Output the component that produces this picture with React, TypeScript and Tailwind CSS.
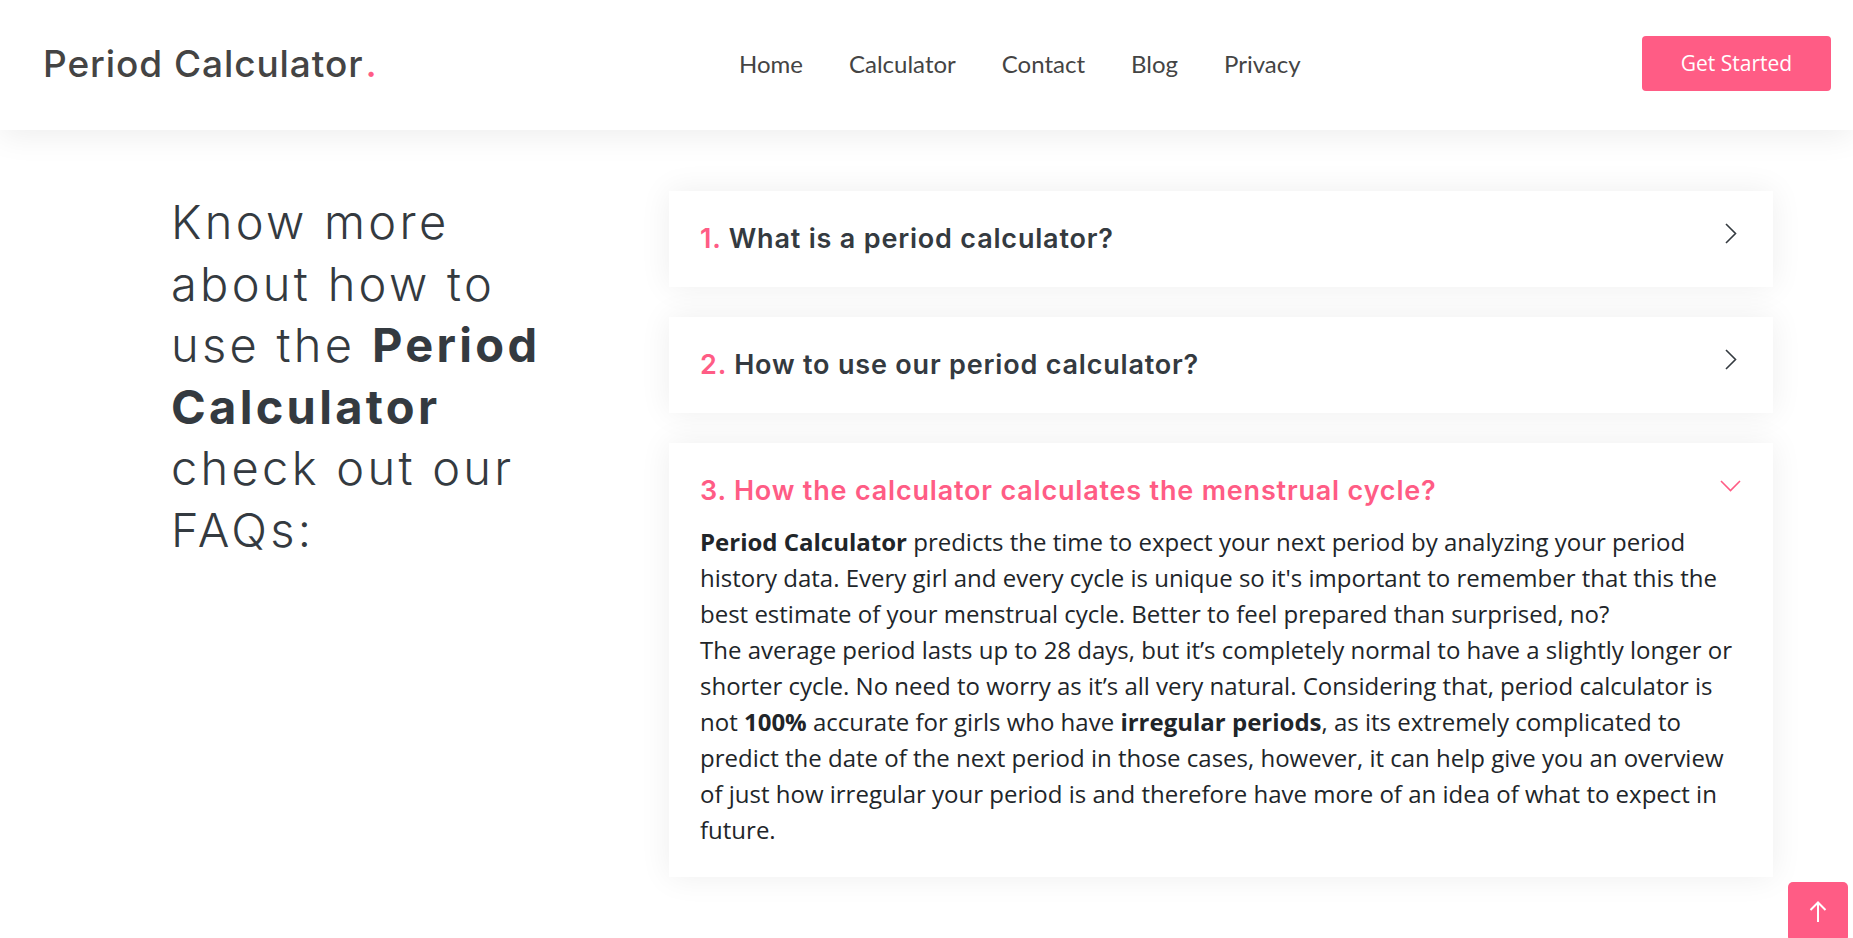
import React from "react";

const faqs = [
  { num: "1.", title: "What is a period calculator?", open: false },
  { num: "2.", title: "How to use our period calculator?", open: false },
  { num: "3.", title: "How the calculator calculates the menstrual cycle?", open: true },
];

const heading = "font-['Inter',sans-serif]";

function ChevronRight() {
  return (
    <svg width="12" height="21" viewBox="0 0 12 21" fill="none" className="mr-[5px] mt-[-10px]">
      <path d="M1 1 L10.5 10.5 L1 20" stroke="#343a40" strokeWidth="1.6" />
    </svg>
  );
}

function ChevronDown() {
  return (
    <svg width="21" height="12" viewBox="0 0 21 12" fill="none" className="mr-[1px] mt-[-10px]">
      <path d="M1 1 L10.5 10.5 L20 1" stroke="#ff5c85" strokeWidth="1.6" />
    </svg>
  );
}

export default function App() {
  return (
    <div className="min-h-screen bg-white font-['Open_Sans',sans-serif]">
      {/* Header */}
      <header className="relative z-10 flex h-[130px] items-center bg-white pb-[3px] pl-[43px] pr-[22px] shadow-[0_6px_30px_rgba(0,0,0,0.07)]">
        <div className="w-[696px]">
          <span className={`${heading} text-[37px] font-medium tracking-[0.025em] text-[#444]`}>
            Period Calculator
            <span className="ml-[2px] text-[#ff5c85]">.</span>
          </span>
        </div>
        <nav className="flex gap-[46px] font-['Lato',sans-serif] text-[24px] text-[#444]">
          <a>Home</a>
          <a>Calculator</a>
          <a>Contact</a>
          <a>Blog</a>
          <a>Privacy</a>
        </nav>
        <button className="ml-auto h-[55px] w-[189px] rounded-[4px] bg-[#ff5c85] text-[21px] text-white">
          Get Started
        </button>
      </header>

      {/* FAQ section */}
      <main className="flex pl-[171px] pt-[61px]">
        <div className="w-[498px]">
          <h2 className={`${heading} text-[47px] font-light leading-[61.5px] tracking-[0.07em] text-[#343a40]`}>
            Know more
            <br />
            about how to
            <br />
            use the <span className="font-bold">Period</span>
            <br />
            <span className="font-bold">Calculator</span>
            <br />
            check out our
            <br />
            FAQs:
          </h2>
        </div>

        <div className="flex w-[1104px] flex-col gap-[30px]">
          {faqs.map((faq) => (
            <div
              key={faq.num}
              className={`bg-white px-[31px] pt-[30px] shadow-[0_0_30px_rgba(0,0,0,0.07)] ${
                faq.open ? "pb-[29px]" : "pb-[31px]"
              }`}
            >
              <div className="flex items-center justify-between">
                <h3
                  className={`${heading} text-[27px] font-semibold leading-[35px] tracking-[0.03em] ${
                    faq.open ? "text-[#ff5c85]" : "text-[#343a40]"
                  }`}
                >
                  <span className="text-[#ff5c85]">{faq.num}</span> {faq.title}
                </h3>
                {faq.open ? <ChevronDown /> : <ChevronRight />}
              </div>
              {faq.open && (
                <div className="mt-[16px] text-[24px] leading-[36px] text-[#212529]">
                  <p>
                    <span className="font-bold">Period Calculator</span> predicts the time to expect
                    your next period by analyzing your period history data. Every girl and every cycle
                    is unique so it's important to remember that this the best estimate of your
                    menstrual cycle. Better to feel prepared than surprised, no?
                  </p>
                  <p>
                    The average period lasts up to 28 days, but it’s completely normal to have a
                    slightly longer or shorter cycle. No need to worry as it’s all very natural.
                    Considering that, period calculator is not <span className="font-bold">100%</span>{" "}
                    accurate for girls who have <span className="font-bold">irregular periods</span>,
                    as its extremely complicated to predict the date of the next period in those
                    cases, however, it can help give you an overview of just how irregular your period
                    is and therefore have more of an idea of what to expect in future.
                  </p>
                </div>
              )}
            </div>
          ))}
        </div>
      </main>

      {/* Back to top */}
      <button className="fixed right-[5px] top-[882px] flex h-[60px] w-[60px] items-start justify-center rounded-[5px] bg-[#ff5c85] pt-[19px]">
        <svg width="18" height="22" viewBox="0 0 18 22" fill="none">
          <path d="M9 21 V2 M1.5 9 L9 1.5 L16.5 9" stroke="white" strokeWidth="2" />
        </svg>
      </button>
    </div>
  );
}
